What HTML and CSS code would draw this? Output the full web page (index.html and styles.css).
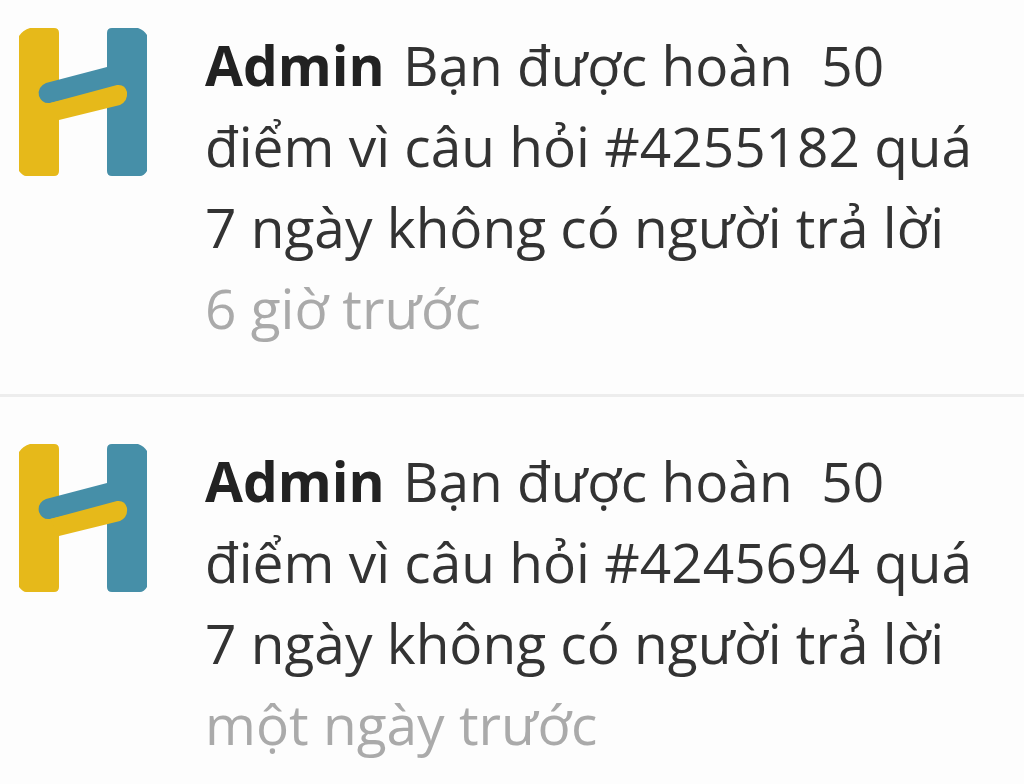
FILE: index.html
```html
<!DOCTYPE html>
<html lang="vi">
<head>
<meta charset="utf-8">
<meta name="viewport" content="width=device-width, initial-scale=1">
<title>Thông báo</title>
<link rel="stylesheet" href="styles.css">
</head>
<body>
<svg class="defs" aria-hidden="true">
  <symbol id="logo" viewBox="0 0 128 150">
    <path fill="#e6b91a" d="M11 1H35Q40 1 40 6V68L98 58V77L40 92V144Q40 149 35 149H7Q4 149 0 144V9Q4 3 11 1Z"/>
    <path fill="#468fa8" d="M93 1H119Q125 3 128 8V144Q125 149 121 149H93Q88 149 88 144V63L31 76Q23 77 20 69Q18 60 27 56L88 40V6Q88 1 93 1Z"/>
    <path fill="#e6b91a" d="M31 76L98 58Q106 57 108 65Q109 74 101 78L40 93Z"/>
  </symbol>
</svg>
<main class="notifications">
  <article class="notification">
    <svg class="avatar" role="img" aria-label="H"><use href="#logo"/></svg>
    <div class="content">
      <p class="message"><strong class="author">Admin</strong> Bạn được hoàn&nbsp; 50 điểm vì câu hỏi #4255182 quá 7 ngày không có người trả lời</p>
      <time class="time">6 giờ trước</time>
    </div>
  </article>
  <article class="notification">
    <svg class="avatar" role="img" aria-label="H"><use href="#logo"/></svg>
    <div class="content">
      <p class="message"><strong class="author">Admin</strong> Bạn được hoàn&nbsp; 50 điểm vì câu hỏi #4245694 quá 7 ngày không có người trả lời</p>
      <time class="time">một ngày trước</time>
    </div>
  </article>
</main>
</body>
</html>
```
FILE: styles.css
```css
* { box-sizing: border-box; }
body { margin: 0; background: #fdfdfd; color: #333; font-family: "Open Sans", "Noto Sans", sans-serif; font-size: 55px; line-height: 81px; }
.defs { position: absolute; width: 0; height: 0; }
.notification { display: flex; gap: 58px; padding: 27px 20px 46px 19px; }
.notification + .notification { border-top: 3px solid #ededed; padding-top: 46px; }
.notification:last-child { padding-bottom: 16px; }
.avatar { flex: none; width: 128px; height: 150px; }
.content { flex: 1; min-width: 0; margin-top: -3px; }
.message { margin: 0; }
.author { font-weight: 700; color: #222; margin-right: 4px; }
.time { display: block; color: #aaa; }
```
